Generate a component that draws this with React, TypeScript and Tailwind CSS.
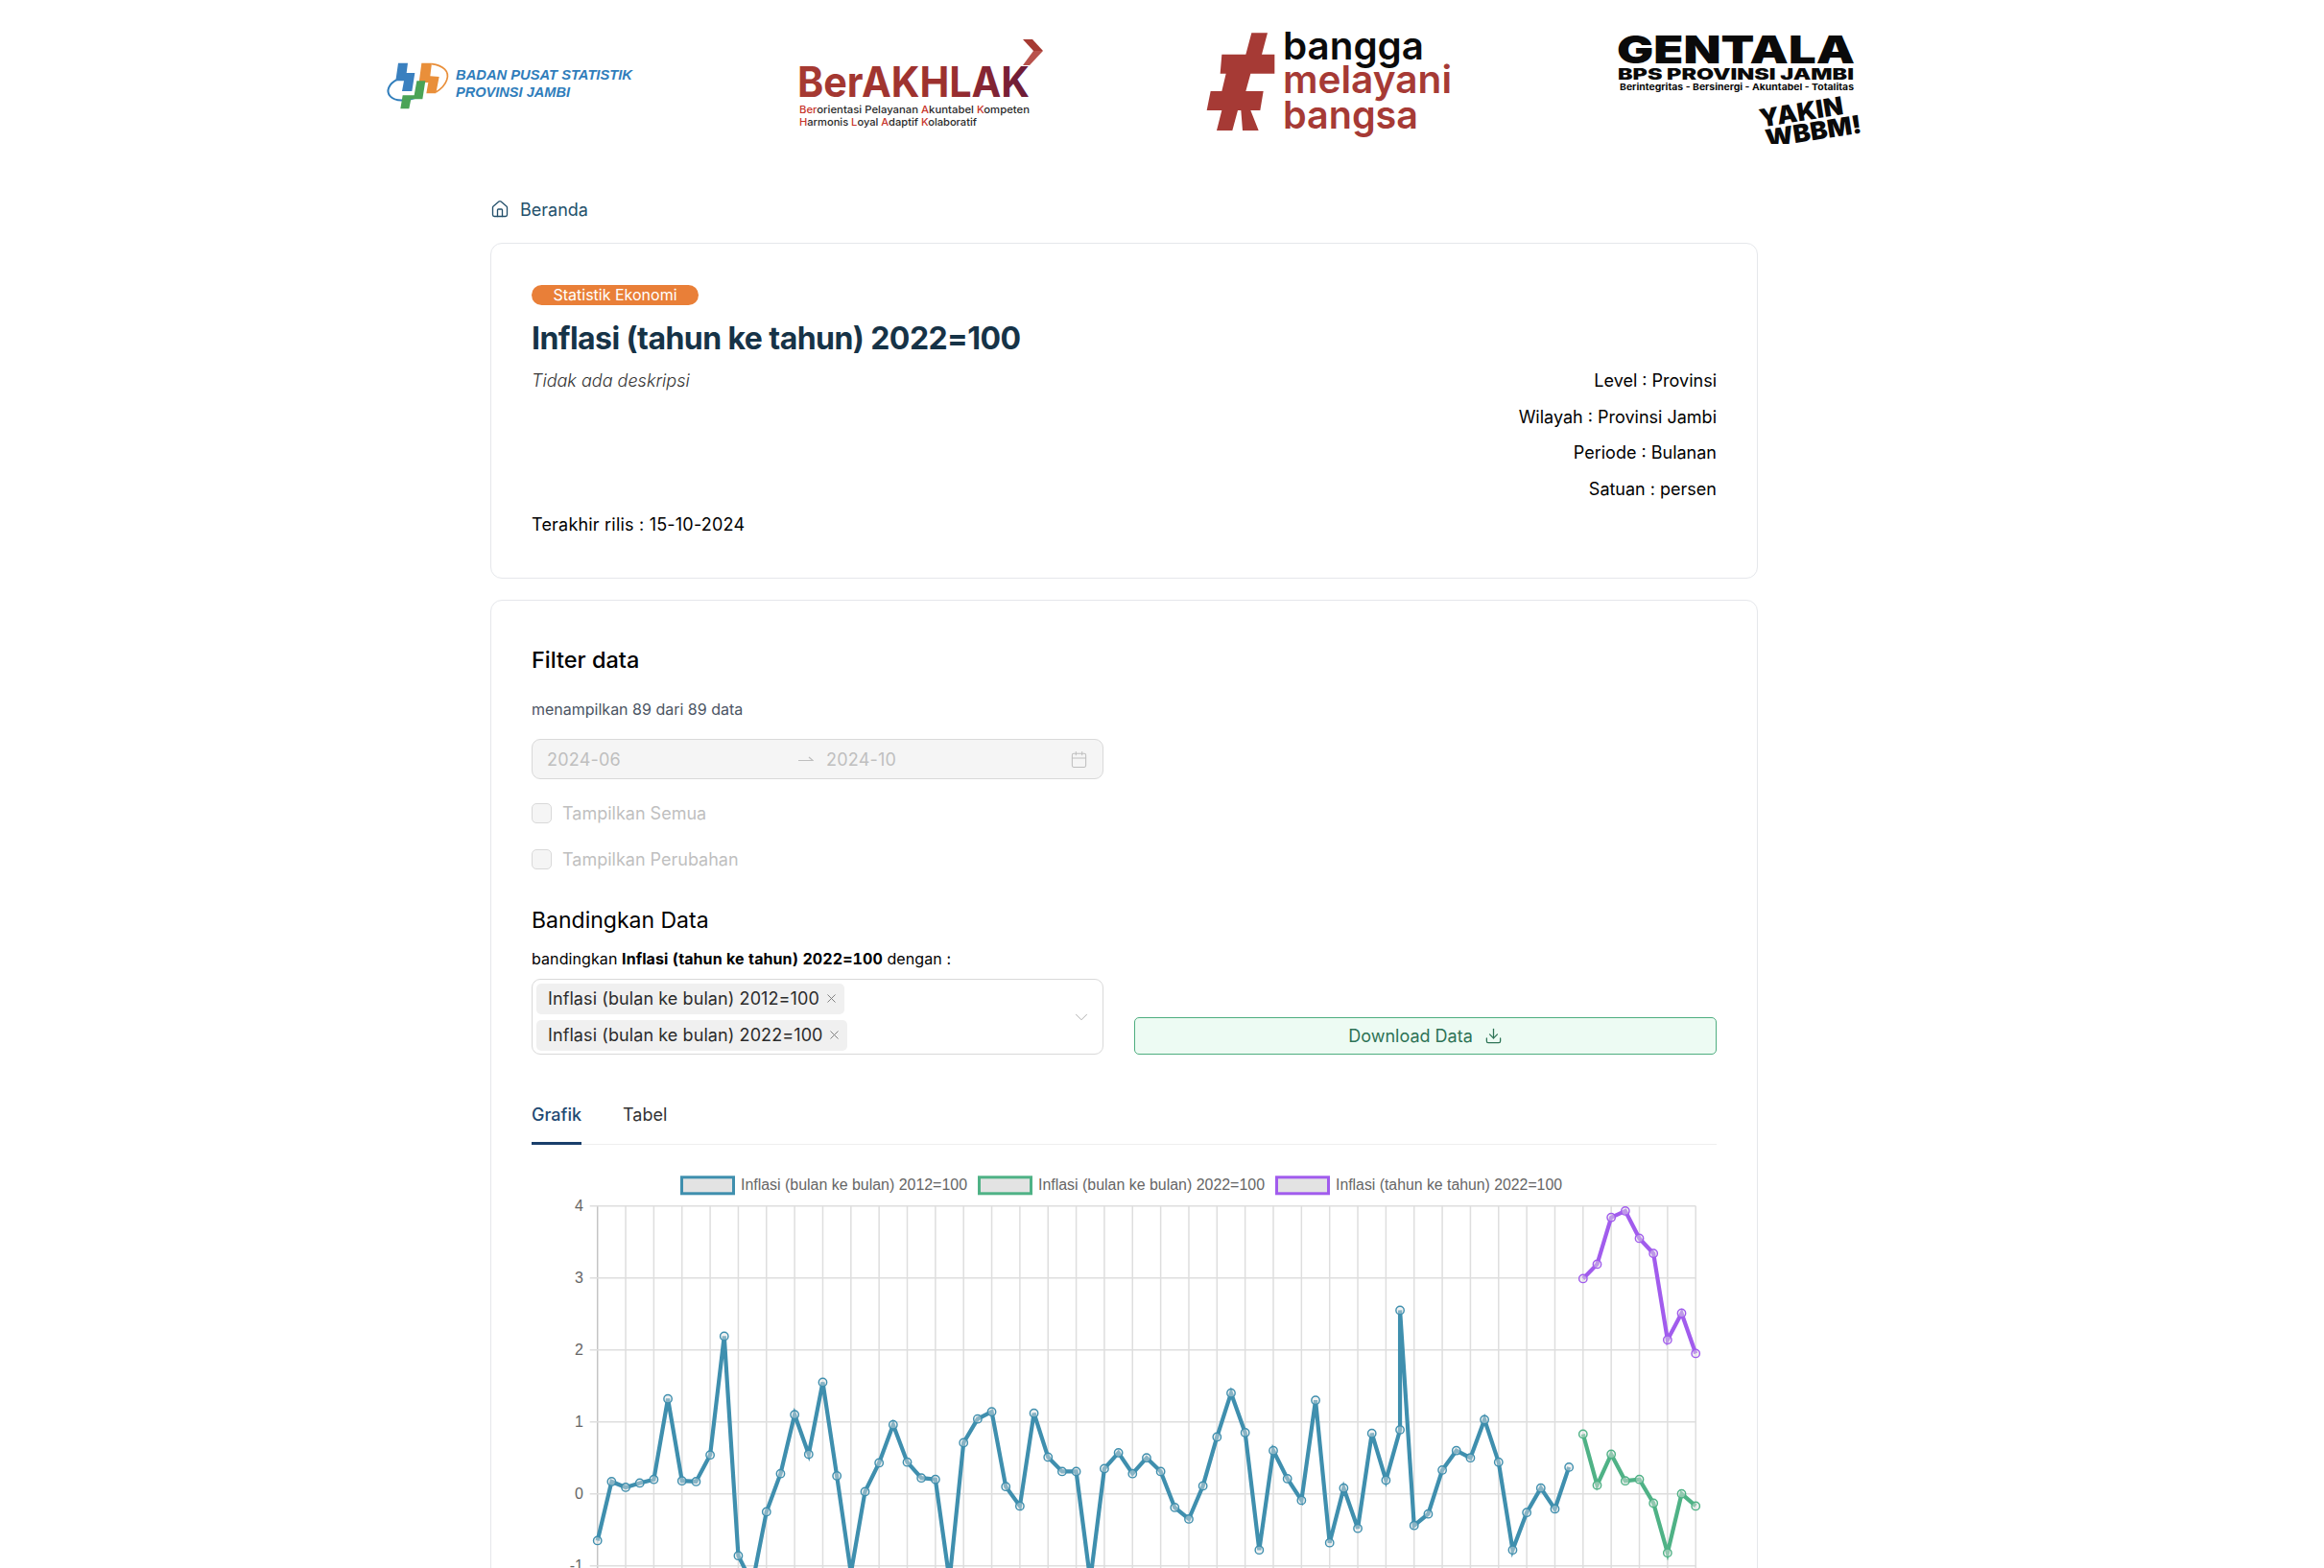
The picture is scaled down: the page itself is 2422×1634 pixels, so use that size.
import { Calendar, ChevronDown, Download, House, X } from 'lucide-react';

const SANS = 'Inter, sans-serif';
const ARIAL = '"Liberation Sans", Arial, sans-serif';

const X0 = 622.7;
const STEP = 14.673;
const Y0 = 1555.7;
const UNIT = 75;

// [index, value], index 57 appears twice because the spike sits on the same label
const BLUE: [number, number][] = [
  [0, -0.65], [1, 0.17], [2, 0.09], [3, 0.15], [4, 0.2], [5, 1.32], [6, 0.18], [7, 0.17], [8, 0.54], [9, 2.19],
  [10, -0.86], [11, -1.25], [12, -0.25], [13, 0.28], [14, 1.1], [15, 0.55], [16, 1.55], [17, 0.25], [18, -1.1], [19, 0.03],
  [20, 0.43], [21, 0.96], [22, 0.44], [23, 0.22], [24, 0.2], [25, -1.2], [26, 0.71], [27, 1.04], [28, 1.14], [29, 0.1],
  [30, -0.17], [31, 1.12], [32, 0.51], [33, 0.31], [34, 0.31], [35, -1.2], [36, 0.35], [37, 0.57], [38, 0.28], [39, 0.5],
  [40, 0.31], [41, -0.19], [42, -0.35], [43, 0.11], [44, 0.79], [45, 1.4], [46, 0.85], [47, -0.78], [48, 0.6], [49, 0.21],
  [50, -0.09], [51, 1.3], [52, -0.68], [53, 0.08], [54, -0.48], [55, 0.84], [56, 0.19], [57, 0.89], [57, 2.55], [58, -0.44],
  [59, -0.28], [60, 0.33], [61, 0.6], [62, 0.5], [63, 1.03], [64, 0.44], [65, -0.78], [66, -0.26], [67, 0.08], [68, -0.21],
  [69, 0.37],
];

const toSeries = (start: number, values: number[]): [number, number][] =>
  values.map((v, i) => [start + i, v]);

const GREEN = toSeries(70, [0.83, 0.12, 0.55, 0.18, 0.2, -0.13, -0.82, 0, -0.17]);
const PURPLE = toSeries(70, [2.99, 3.19, 3.84, 3.93, 3.55, 3.34, 2.14, 2.51, 1.95]);

const DATASETS = [
  { color: '#3f8fae', points: BLUE },
  { color: '#4fb286', points: GREEN },
  { color: '#a15ced', points: PURPLE },
];

const LEGEND = [
  { x: 709, color: '#3f8fae', label: 'Inflasi (bulan ke bulan) 2012=100' },
  { x: 1019, color: '#4fb286', label: 'Inflasi (bulan ke bulan) 2022=100' },
  { x: 1329, color: '#a15ced', label: 'Inflasi (tahun ke tahun) 2022=100' },
];

const px = (i: number) => X0 + i * STEP;
const py = (v: number) => Y0 - v * UNIT;

function BpsLogo() {
  return (
    <svg width={270} height={125} viewBox="400 25 270 125" className="shrink-0">
      <g transform="translate(395 50) scale(0.3333)">
        <path d="M58 98 C30 112 20 135 36 152 C52 168 85 166 112 156" fill="none" stroke="#2f7dbb" strokeWidth="6" />
        <path d="M165 50 C200 55 222 72 212 100 C206 118 195 128 178 138" fill="none" stroke="#e98f3a" strokeWidth="5" />
        <polygon points="60,47 90,47 86,78 112,78 103,135 72,135 78,103 52,103" fill="#3a80bf" />
        <polygon points="133,47 165,47 160,88 188,90 178,142 148,142 154,108 125,108" fill="#e98f3a" />
        <polygon points="118,103 145,103 136,160 100,160 94,190 67,190 74,148 110,148" fill="#4aa356" />
      </g>
      <text x={475} y={83} fontFamily={ARIAL} fontSize={14.5} fontWeight={700} fontStyle="italic" fill="#2f7dbb" textLength={184} lengthAdjust="spacingAndGlyphs">
        BADAN PUSAT STATISTIK
      </text>
      <text x={475} y={100.5} fontFamily={ARIAL} fontSize={14.5} fontWeight={700} fontStyle="italic" fill="#2f7dbb" textLength={119} lengthAdjust="spacingAndGlyphs">
        PROVINSI JAMBI
      </text>
    </svg>
  );
}

function AkhlakLogo() {
  const red = '#c8352b';
  const dark = '#2a2a2a';
  return (
    <svg width={265} height={125} viewBox="830 25 265 125" className="ml-[160px] shrink-0">
      <defs>
        <linearGradient id="akhlak" x1="0" x2="1" y1="0" y2="0">
          <stop offset="0" stopColor="#a63a32" />
          <stop offset="0.65" stopColor="#9c302f" />
          <stop offset="1" stopColor="#6b1a38" />
        </linearGradient>
      </defs>
      <polygon points="1066,41 1076,41 1087,53 1077,53" fill="#a63a32" />
      <polygon points="1077,53 1087,53 1073,68 1066,68" fill="#b8524c" />
      <text x={831} y={101} fontFamily={SANS} fontSize={44} fontWeight={700} fill="url(#akhlak)" textLength={242} lengthAdjust="spacingAndGlyphs">
        BerAKHLAK
      </text>
      <text x={833} y={118} fontFamily={SANS} fontSize={11} fontWeight={500} fill={dark} textLength={240} lengthAdjust="spacingAndGlyphs">
        <tspan fill={red}>Ber</tspan>orientasi Pelayanan <tspan fill={red}>A</tspan>kuntabel <tspan fill={red}>K</tspan>ompeten
      </text>
      <text x={833} y={131} fontFamily={SANS} fontSize={11} fontWeight={500} fill={dark} textLength={185} lengthAdjust="spacingAndGlyphs">
        <tspan fill={red}>H</tspan>armonis <tspan fill={red}>L</tspan>oyal <tspan fill={red}>A</tspan>daptif <tspan fill={red}>K</tspan>olaboratif
      </text>
    </svg>
  );
}

function BanggaLogo() {
  const red = '#a63a35';
  return (
    <svg width={265} height={125} viewBox="1255 25 265 125" className="ml-[160px] shrink-0">
      <g transform="translate(1245 25) scale(0.3333)" fill={red}>
        <polygon points="178,28 228,28 210,95 250,95 250,155 175,155 160,210 215,210 205,270 175,270 200,333 150,333 145,270 135,270 118,333 69,333 85,270 38,270 50,210 85,210 98,155 80,155 85,95 160,95" />
      </g>
      <g fontFamily={SANS} fontSize={40} fontWeight={600}>
        <text x={1337} y={61.5} fill="#0b0b0b" textLength={147} lengthAdjust="spacingAndGlyphs">bangga</text>
        <text x={1337} y={96.5} fill={red} textLength={176} lengthAdjust="spacingAndGlyphs">melayani</text>
        <text x={1337} y={133.5} fill={red} textLength={141} lengthAdjust="spacingAndGlyphs">bangsa</text>
      </g>
    </svg>
  );
}

function GentalaLogo() {
  return (
    <svg width={270} height={125} viewBox="1680 25 270 125" className="ml-[160px] shrink-0">
      <g fontFamily={SANS} fill="#0a0a0a">
        <text x={1685} y={66} fontSize={40} fontWeight={900} textLength={248} lengthAdjust="spacingAndGlyphs">GENTALA</text>
        <text x={1686} y={82.5} fontSize={16} fontWeight={900} textLength={246} lengthAdjust="spacingAndGlyphs">BPS PROVINSI JAMBI</text>
        <text x={1688} y={93.5} fontSize={9.5} fontWeight={700} textLength={244} lengthAdjust="spacingAndGlyphs">Berintegritas - Bersinergi - Akuntabel - Totalitas</text>
        <g transform="rotate(-9 1890 128)" fontSize={26} fontWeight={900}>
          <text x={1835} y={124} textLength={88} lengthAdjust="spacingAndGlyphs">YAKIN</text>
          <text x={1838} y={146} textLength={101} lengthAdjust="spacingAndGlyphs">WBBM!</text>
        </g>
      </g>
    </svg>
  );
}

function InflationChart() {
  const evenTicks = Array.from({ length: 40 }, (_, i) => i * 2);
  return (
    <svg width={1235} height={434} viewBox="554 1200 1235 434" className="mt-2 block">
      {LEGEND.map((item) => (
        <g key={item.label}>
          <rect x={item.x + 1.5} y={1225.8} width={54} height={17} fill="#e3e3e3" stroke={item.color} strokeWidth={3} />
          <text x={item.x + 63} y={1239} fontFamily={ARIAL} fontSize={16} fill="#666" textLength={236} lengthAdjust="spacingAndGlyphs">
            {item.label}
          </text>
        </g>
      ))}
      {evenTicks.map((i) => (
        <line key={i} x1={px(i)} x2={px(i)} y1={1255.7} y2={1640} stroke={i === 0 ? '#c4c4c4' : '#dedede'} strokeWidth={1.5} />
      ))}
      {[4, 3, 2, 1, 0, -1].map((v) => (
        <g key={v}>
          <line x1={X0 - 8} x2={px(78)} y1={py(v)} y2={py(v)} stroke="#dedede" strokeWidth={1.5} />
          <text x={608} y={py(v) + 5.5} textAnchor="end" fontFamily={ARIAL} fontSize={16} fill="#666">
            {v}
          </text>
        </g>
      ))}
      {DATASETS.map((set) => (
        <g key={set.color}>
          <polyline
            points={set.points.map(([i, v]) => `${px(i)},${py(v)}`).join(' ')}
            fill="none"
            stroke={set.color}
            strokeWidth={4.2}
            strokeLinejoin="miter"
          />
          {set.points.map(([i, v], n) => (
            <circle key={n} cx={px(i)} cy={py(v)} r={4.2} fill="#e3e3e3" fillOpacity={0.45} stroke={set.color} strokeWidth={1.4} />
          ))}
        </g>
      ))}
    </svg>
  );
}

function Tag({ label, width }: { label: string; width: string }) {
  return (
    <span className={`flex h-[32px] items-center justify-between rounded-[5px] bg-[#f0f0f0] pr-[6px] pl-[12px] text-[18px] leading-[27px] tracking-[0.09px] whitespace-nowrap text-[#2b2b2b] ${width}`}>
      {label}
      <X size={15} strokeWidth={1.5} className="text-[#7a7a7a]" />
    </span>
  );
}

function DisabledCheck({ label, className }: { label: string; className: string }) {
  return (
    <label className={`flex h-[27px] items-center gap-[11px] ${className}`}>
      <span className="h-[21px] w-[21px] rounded-[5px] border border-[#d9d9d9] bg-[#f5f5f5]" />
      <span className="text-[18px] text-[#bfbfbf]">{label}</span>
    </label>
  );
}

export default function App() {
  return (
    <div className="h-[1634px] overflow-hidden bg-white font-[family-name:Inter,sans-serif] text-black">
      {/* logo */}
      <header className="flex h-[204px] items-start pt-[25px] pl-[400px]">
        <BpsLogo />
        <AkhlakLogo />
        <BanggaLogo />
        <GentalaLogo />
      </header>

      <main className="ml-[511px] w-[1321px]">
        <nav className="flex h-[28px] items-center gap-[11px] text-[18px] text-[#24506b]">
          <House size={20} strokeWidth={1.6} />
          <span>Beranda</span>
        </nav>

        {/* info */}
        <section className="mt-[21px] h-[350px] rounded-[12px] border border-[#e5e7eb] px-[42px] pt-[43px]">
          <span className="block h-[21px] w-[174px] rounded-full bg-[#e97f38] text-center text-[16px] leading-[21px] text-white">
            Statistik Ekonomi
          </span>
          <h1 className="mt-[15px] h-[40px] text-[32px] leading-[40px] font-bold tracking-[-0.56px] text-[#163347]">
            Inflasi (tahun ke tahun) 2022=100
          </h1>
          <div className="mt-[10px] flex justify-between">
            <p className="text-[18px] leading-[27px] font-light text-[#333] italic">Tidak ada deskripsi</p>
            <div className="flex flex-col gap-[10.5px] text-right text-[18px] leading-[27px]">
              <p>Level : Provinsi</p>
              <p>Wilayah : Provinsi Jambi</p>
              <p>Periode : Bulanan</p>
              <p>Satuan : persen</p>
            </div>
          </div>
          <p className="mt-[10.5px] text-[18px] leading-[27px] tracking-[0.2px]">Terakhir rilis : 15-10-2024</p>
        </section>

        {/* filter */}
        <section className="mt-[22px] rounded-[12px] border border-[#e5e7eb] px-[42px] pt-[44px] pb-[60px]">
          <h2 className="text-[23.5px] leading-[36px] font-medium">Filter data</h2>
          <p className="mt-[21px] text-[16px] leading-[24px] text-[#4b5563]">menampilkan 89 dari 89 data</p>

          <div className="mt-[19px] flex h-[42px] w-[596px] items-center rounded-[9px] border border-[#d9d9d9] bg-[#f5f5f5] px-[15px] text-[18px] tracking-[0.2px] text-[#bfbfbf]">
            <span className="w-[262px]">2024-06</span>
            <svg width={16} height={10} viewBox="0 0 16 10" className="shrink-0 text-[#bfbfbf]">
              <path d="M0 6.5 H15 L11 3" fill="none" stroke="currentColor" strokeWidth={1.2} />
            </svg>
            <span className="ml-[13px] flex-1">2024-10</span>
            <Calendar size={19} strokeWidth={1.3} />
          </div>

          <DisabledCheck label="Tampilkan Semua" className="mt-[22px]" />
          <DisabledCheck label="Tampilkan Perubahan" className="mt-[21px]" />

          <h2 className="mt-[32px] text-[23px] leading-[36px]">Bandingkan Data</h2>
          <p className="mt-[10px] text-[16px] leading-[24px] tracking-[0.09px]">
            bandingkan <b className="font-bold tabular-nums">Inflasi (tahun ke tahun) 2022=100</b> dengan :
          </p>

          <div className="mt-[9px] grid grid-cols-[596px_1fr] items-end gap-x-[32px]">
            <div className="relative flex h-[79px] flex-col items-start justify-center gap-[6px] rounded-[9px] border border-[#d9d9d9] pl-[4px]">
              <Tag label="Inflasi (bulan ke bulan) 2012=100" width="w-[321px]" />
              <Tag label="Inflasi (bulan ke bulan) 2022=100" width="w-[324px]" />
              <ChevronDown size={22} strokeWidth={1} className="absolute top-[28px] right-[11px] text-[#a8a8a8]" />
            </div>
            <button className="flex h-[39px] items-center justify-center gap-[12px] rounded-[5px] border border-[#4fae80] bg-[#edfbf3] text-[18px] text-[#2d7356]">
              Download Data
              <Download size={19} strokeWidth={1.6} />
            </button>
          </div>

          <div className="mt-[49px] flex gap-[43px] border-b border-[#eeeeee] text-[18px] leading-[27px]">
            <span className="-mb-px border-b-[3px] border-[#1a3f6b] pb-[15px] font-medium text-[#1e4a73]">Grafik</span>
            <span className="text-[#333]">Tabel</span>
          </div>

          <InflationChart />
        </section>
      </main>
    </div>
  );
}
